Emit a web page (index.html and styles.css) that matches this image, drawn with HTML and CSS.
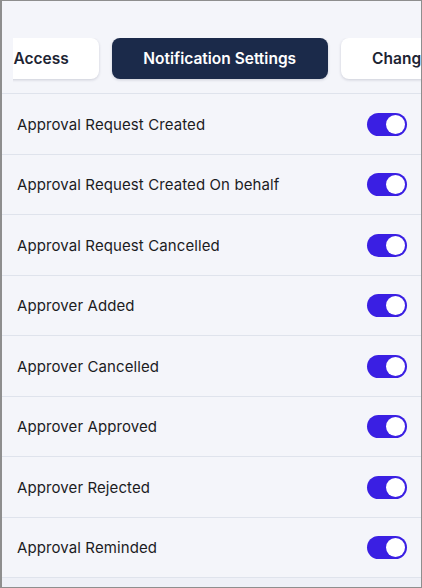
FILE: index.html
```html
<!DOCTYPE html>
<html>
<head>
<meta charset="utf-8">
<link rel="stylesheet" href="styles.css">
</head>
<body>
<div class="page">
  <div class="tabs-bar">
    <div class="tabs-viewport">
      <div class="tabs-track">
        <div class="tab">Access</div>
        <div class="tab active">Notification Settings</div>
        <div class="tab">Change Log</div>
      </div>
    </div>
  </div>
  <div class="list">
    <div class="row"><span class="label">Approval Request Created</span><span class="toggle"><span class="knob"></span></span></div>
    <div class="row"><span class="label">Approval Request Created On behalf</span><span class="toggle"><span class="knob"></span></span></div>
    <div class="row"><span class="label">Approval Request Cancelled</span><span class="toggle"><span class="knob"></span></span></div>
    <div class="row"><span class="label">Approver Added</span><span class="toggle"><span class="knob"></span></span></div>
    <div class="row"><span class="label">Approver Cancelled</span><span class="toggle"><span class="knob"></span></span></div>
    <div class="row"><span class="label">Approver Approved</span><span class="toggle"><span class="knob"></span></span></div>
    <div class="row"><span class="label">Approver Rejected</span><span class="toggle"><span class="knob"></span></span></div>
    <div class="row"><span class="label">Approval Reminded</span><span class="toggle"><span class="knob"></span></span></div>
    <div class="row-end"></div>
  </div>
</div>
</body>
</html>
```

FILE: styles.css
```css
* { box-sizing: border-box; }
html, body { margin: 0; padding: 0; }
body {
  font-family: Inter, "Noto Sans", sans-serif;
  background: #ffffff;
}
.page {
  width: 422px;
  height: 588px;
  border: 1px solid #8e8e8e;
  border-left-width: 2px;
  background: #f4f5fa;
  overflow: hidden;
  display: flex;
  flex-direction: column;
}
.tabs-bar {
  height: 92px;
  padding-top: 37px;
  padding-left: 11px;
}
.tabs-viewport {
  overflow: hidden;
  padding: 0 0 6px 0;
}
.tabs-track {
  display: flex;
  gap: 13px;
  margin-left: -31px;
  width: max-content;
}
.tab {
  height: 41px;
  padding: 0 31.5px;
  display: flex;
  align-items: center;
  background: #ffffff;
  border-radius: 8px;
  box-shadow: 0 1px 3px rgba(20, 30, 60, 0.18);
  font-size: 15.5px;
  font-weight: 600;
  color: #1d2433;
  white-space: nowrap;
}
.tab:first-child {
  padding-right: 30px;
}
.tab.active {
  background: #1b2a4a;
  color: #ffffff;
}
.list {
  flex: 1;
  display: flex;
  flex-direction: column;
}
.row {
  height: 60.5px;
  border-top: 1px solid #dfe3ec;
  display: flex;
  align-items: center;
  justify-content: space-between;
  padding: 1px 14px 0 15px;
}
.label {
  font-size: 15px;
  color: #1c1c1f;
  letter-spacing: 0.1px;
}
.toggle {
  width: 40px;
  height: 23px;
  border-radius: 12px;
  background: #3a1fe3;
  display: flex;
  align-items: center;
  justify-content: flex-end;
  padding-right: 2px;
}
.knob {
  width: 19px;
  height: 19px;
  border-radius: 50%;
  background: #ffffff;
}
.row-end {
  flex: 1;
  border-top: 1px solid #dfe3ec;
  background: #eef0f7;
}
```
